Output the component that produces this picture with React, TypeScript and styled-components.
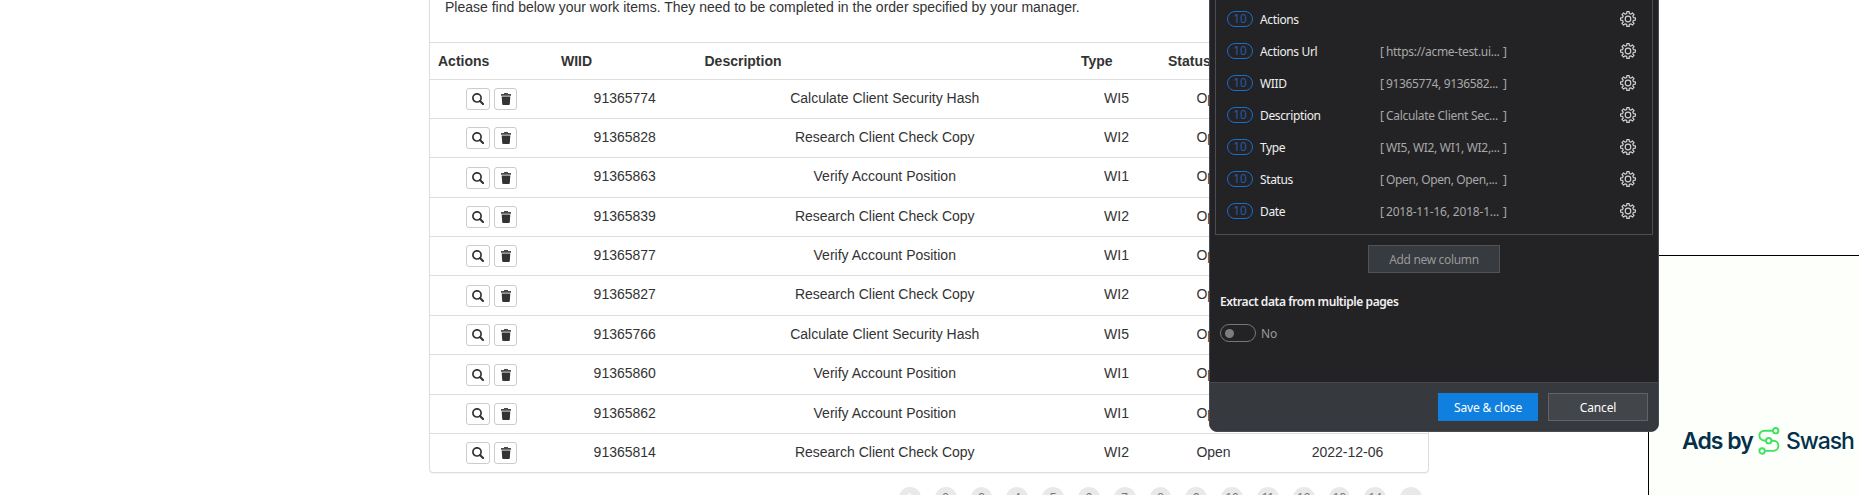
import React from "react";
import styled, { createGlobalStyle } from "styled-components";

const GlobalStyle = createGlobalStyle`
  *, *::before, *::after { box-sizing: border-box; }
  html, body { margin: 0; overflow: hidden; background: #fff; }
  body { font-family: "Liberation Sans", Arial, sans-serif; font-size: 14px; color: #333; }
  button { font: inherit; color: inherit; padding: 0; margin: 0; }
`;

const Page = styled.div`
  position: relative;
  width: 1859px;
  height: 495px;
  overflow: hidden;
`;

const Content = styled.main`
  width: 1000px;
  margin-left: 429px;
`;

const Card = styled.section`
  height: 473px;
  border: 1px solid #ddd;
  border-top: 0;
  border-radius: 0 0 4px 4px;
  box-shadow: 0 1px 1px rgba(0, 0, 0, 0.05);
`;

const Intro = styled.p`
  margin: 0;
  height: 42px;
  padding: 0 15px;
  line-height: 14px;
`;

const RowBase = styled.div`
  display: grid;
  grid-template-columns: 123px 143.5px 376.5px 87px 107px 1fr;
  border-top: 1px solid #ddd;
`;

const HeadRow = styled(RowBase)`
  height: 37px;
  font-weight: bold;
  line-height: 36px;
  & > span { padding-left: 8px; }
`;

const BodyRow = styled(RowBase)<{ $height: number }>`
  height: ${(p) => p.$height}px;
  line-height: 36px;
  text-align: center;
`;

const Actions = styled.div`
  display: flex;
  align-items: flex-end;
  gap: 4px;
  padding: 0 0 8px 36px;
`;

const IconButton = styled.button<{ $width: number }>`
  display: flex;
  align-items: center;
  justify-content: center;
  width: ${(p) => p.$width}px;
  height: 22px;
  border: 1px solid #ccc;
  border-radius: 3px;
  background: #fff;
  svg { display: block; }
`;

const Pager = styled.nav`
  display: flex;
  gap: 14px;
  margin: 14px 0 0 470px;
`;

const PageDot = styled.span<{ $current?: boolean }>`
  width: 21.8px;
  height: 21.8px;
  flex: none;
  border-radius: 50%;
  background: #e9e9e9;
  color: ${(p) => (p.$current ? "#fff" : "#777")};
  font-size: 12px;
  line-height: 22px;
  text-align: center;
`;

const AdPanel = styled.aside`
  position: absolute;
  left: 1648px;
  top: 255px;
  width: 220px;
  height: 250px;
  padding: 169px 0 0 33px;
  border: 1px solid #000;
  background: #fdfffa;
`;

const Brand = styled.div`
  display: flex;
  align-items: center;
  height: 32px;
  color: #04304b;
  font-family: Inter, sans-serif;
  font-size: 23px;
  white-space: nowrap;
  svg { flex: none; margin: 0 6px 0 5px; }
`;

const BrandWord = styled.span<{ $width: number; $weight: number; $spacing: number }>`
  width: ${(p) => p.$width}px;
  font-weight: ${(p) => p.$weight};
  letter-spacing: ${(p) => p.$spacing}px;
`;

const Dialog = styled.div`
  position: absolute;
  left: 1209px;
  top: -10px;
  width: 450px;
  height: 442px;
  display: flex;
  flex-direction: column;
  overflow: hidden;
  border: 1px solid #484b52;
  border-radius: 8px;
  background: #232325;
  font-family: "Noto Sans", sans-serif;
  font-size: 12px;
  color: #f0f0f0;
`;

const ColumnList = styled.div`
  width: 438px;
  height: 244px;
  margin-left: 5px;
  padding: 11px 16px 0 11px;
  border: 1px solid #4b4d54;
`;

const ColumnRow = styled.div`
  display: grid;
  grid-template-columns: 33px 120px 127px 1fr;
  align-items: center;
  height: 32px;
`;

const Count = styled.span`
  width: 26px;
  height: 16px;
  border: 1px solid #1870cc;
  border-radius: 8px;
  color: #2a57a8;
  line-height: 13px;
  text-align: center;
`;

const Label = styled.span`
  letter-spacing: -0.36px;
`;

const Sample = styled.span`
  display: flex;
  justify-content: space-between;
  color: #a8a8a8;
  white-space: pre;
`;

const SampleText = styled.span<{ $spacing: number }>`
  flex: 1;
  padding-left: 2px;
  letter-spacing: ${(p) => p.$spacing}px;
`;

const GearSlot = styled.span`
  display: flex;
  justify-content: flex-end;
`;

const AddButton = styled.button`
  width: 132px;
  height: 28px;
  margin: 10px 0 0 158px;
  border: 1px solid #50545a;
  background: #373a3f;
  color: #999;
  letter-spacing: -0.33px;
`;

const SectionTitle = styled.h3`
  margin: 20px 0 0 10px;
  font-size: 12px;
  line-height: 18px;
  font-weight: 600;
  letter-spacing: -0.43px;
`;

const ToggleRow = styled.div`
  display: flex;
  align-items: center;
  gap: 5px;
  margin: 13px 0 0 10px;
  height: 18px;
  color: #999;
`;

const Toggle = styled.span`
  display: flex;
  align-items: center;
  width: 36px;
  height: 18px;
  padding-left: 4px;
  border: 1px solid #777;
  border-radius: 9px;
  &::before {
    content: "";
    width: 9px;
    height: 9px;
    border-radius: 50%;
    background: #7d7d7d;
  }
`;

const Footer = styled.footer`
  display: flex;
  justify-content: flex-end;
  gap: 10px;
  margin-top: auto;
  height: 49px;
  padding: 10px 10px 0 0;
  border-top: 1px solid #45484e;
  background: #36393e;
`;

const FooterButton = styled.button<{ $primary?: boolean }>`
  width: 100px;
  height: 28px;
  border: 1px solid ${(p) => (p.$primary ? "#0f7fe0" : "#606367")};
  background: ${(p) => (p.$primary ? "#0f7fe0" : "#424549")};
  color: #fff;
  letter-spacing: -0.15px;
`;

const SearchIcon = () => (
  <svg width="12" height="12" viewBox="0 0 12 12" fill="none" stroke="#333">
    <circle cx="5" cy="4.9" r="4.1" strokeWidth="1.7" />
    <path d="M8 8 11 11" strokeWidth="2.1" strokeLinecap="round" />
  </svg>
);

const TrashIcon = () => (
  <svg width="12" height="12" viewBox="0 0 12 12">
    <path d="M4 0h4v1h3v1.8H1V1h3z" fill="#4a4a4a" />
    <path d="M1.7 3.4h8.6L9.8 11a1 1 0 0 1-1 1H3.2a1 1 0 0 1-1-1z" fill="#333" />
  </svg>
);

const teeth = Array.from({ length: 8 }, (_, i) => {
  const at = (r: number, deg: number) => {
    const a = ((i * 45 + deg - 90) * Math.PI) / 180;
    return `${(8 + r * Math.cos(a)).toFixed(2)} ${(8 + r * Math.sin(a)).toFixed(2)}`;
  };
  return `${i ? "L" : "M"}${at(5.7, -13)}L${at(7.5, -9)}L${at(7.5, 9)}L${at(5.7, 13)}L${at(5.5, 22.5)}`;
}).join("");

const GearIcon = () => (
  <svg width="16" height="16" viewBox="0 0 16 16" fill="none" stroke="#cfcfcf" strokeWidth="1.2" strokeLinejoin="round">
    <path d={`${teeth}Z`} />
    <circle cx="8" cy="8" r="2.8" />
  </svg>
);

const SwashIcon = () => (
  <svg width="22" height="28" viewBox="0 0 22 28" fill="none" stroke="#3de35f" strokeWidth="1.9">
    <path d="M14.8 3.7H6.5a4.8 4.8 0 0 0-.4 9.8H8M13.6 13.8h1.8a5 5 0 0 1 0 10.1H7" />
    <circle cx="17.7" cy="3.7" r="2.7" />
    <circle cx="10.7" cy="13.7" r="2.7" />
    <circle cx="4.1" cy="24" r="2.7" />
  </svg>
);

const HASH = "Calculate Client Security Hash";
const COPY = "Research Client Check Copy";
const VERIFY = "Verify Account Position";

const items = [
  { id: "91365774", text: HASH, type: "WI5", height: 39 },
  { id: "91365828", text: COPY, type: "WI2", height: 39 },
  { id: "91365863", text: VERIFY, type: "WI1", height: 40 },
  { id: "91365839", text: COPY, type: "WI2", height: 39 },
  { id: "91365877", text: VERIFY, type: "WI1", height: 39 },
  { id: "91365827", text: COPY, type: "WI2", height: 40 },
  { id: "91365766", text: HASH, type: "WI5", height: 39 },
  { id: "91365860", text: VERIFY, type: "WI1", height: 40 },
  { id: "91365862", text: VERIFY, type: "WI1", height: 39 },
  { id: "91365814", text: COPY, type: "WI2", height: 39 },
];

const columns = [
  { name: "Actions", sample: "", spacing: 0 },
  { name: "Actions Url", sample: "https://acme-test.ui...", spacing: -0.29 },
  { name: "WIID", sample: "91365774, 9136582...", spacing: -0.35 },
  { name: "Description", sample: "Calculate Client Sec...", spacing: -0.3 },
  { name: "Type", sample: "WI5, WI2, WI1, WI2,...", spacing: -0.3 },
  { name: "Status", sample: "Open, Open, Open,...", spacing: -0.35 },
  { name: "Date", sample: "2018-11-16, 2018-1...", spacing: -0.18 },
];

const pages = ["1", "2", "3", "4", "5", "6", "7", "8", "9", "10", "11", "12", "13", "14", ""];

export default function App() {
  return (
    <Page>
      <GlobalStyle />
      <Content>
        <Card>
          <Intro>
            Please find below your work items. They need to be completed in the order specified by your manager.
          </Intro>
          <HeadRow>
            {["Actions", "WIID", "Description", "Type", "Status", "Date"].map((h) => (
              <span key={h}>{h}</span>
            ))}
          </HeadRow>
          {items.map((item) => (
            <BodyRow key={item.id} $height={item.height}>
              <Actions>
                <IconButton $width={24}><SearchIcon /></IconButton>
                <IconButton $width={23}><TrashIcon /></IconButton>
              </Actions>
              <span>{item.id}</span>
              <span>{item.text}</span>
              <span>{item.type}</span>
              <span>Open</span>
              <span>2022-12-06</span>
            </BodyRow>
          ))}
        </Card>
        <Pager>
          {pages.map((p, i) => (
            <PageDot key={i} $current={i === 0}>{p}</PageDot>
          ))}
        </Pager>
      </Content>
      <AdPanel>
        <Brand>
          <BrandWord $width={71} $weight={600} $spacing={-0.95}>Ads by</BrandWord>
          <SwashIcon />
          <BrandWord $width={70} $weight={500} $spacing={-1.1}>Swash</BrandWord>
        </Brand>
      </AdPanel>
      <Dialog>
        <ColumnList>
          {columns.map((c) => (
            <ColumnRow key={c.name}>
              <Count>10</Count>
              <Label>{c.name}</Label>
              <Sample>
                {c.sample && (
                  <>
                    <span>[</span>
                    <SampleText $spacing={c.spacing}>{c.sample}</SampleText>
                    <span>]</span>
                  </>
                )}
              </Sample>
              <GearSlot><GearIcon /></GearSlot>
            </ColumnRow>
          ))}
        </ColumnList>
        <AddButton>Add new column</AddButton>
        <SectionTitle>Extract data from multiple pages</SectionTitle>
        <ToggleRow><Toggle />No</ToggleRow>
        <Footer>
          <FooterButton $primary>Save &amp; close</FooterButton>
          <FooterButton>Cancel</FooterButton>
        </Footer>
      </Dialog>
    </Page>
  );
}
